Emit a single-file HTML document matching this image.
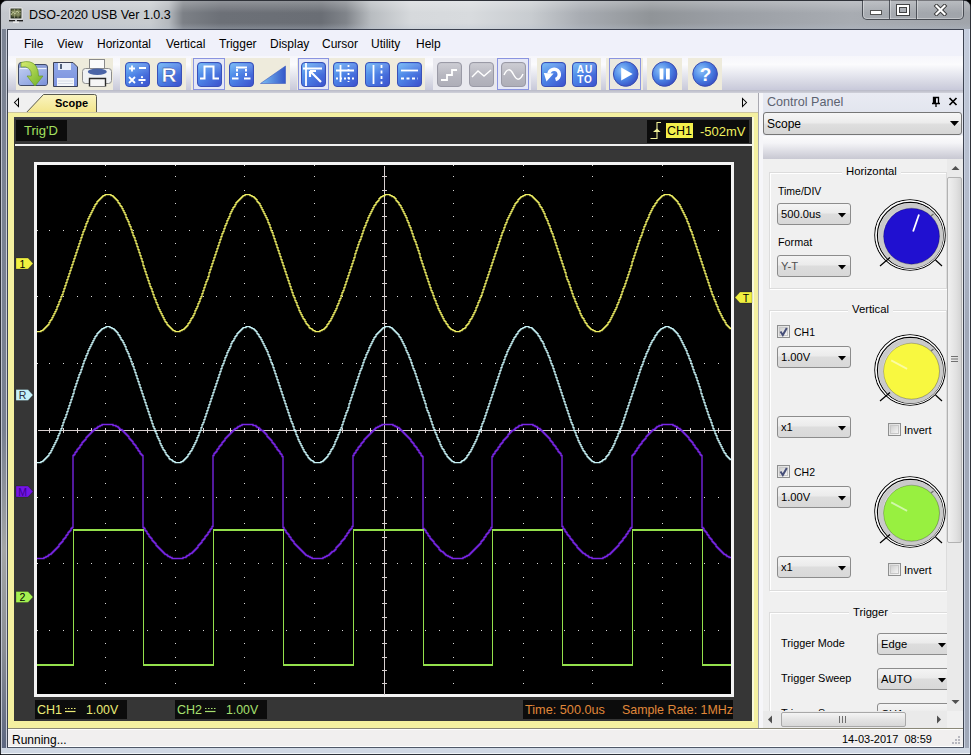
<!DOCTYPE html>
<html><head><meta charset="utf-8">
<style>
*{margin:0;padding:0;box-sizing:border-box}
html,body{width:971px;height:755px;overflow:hidden;background:#000}
body{position:relative;font-family:"Liberation Sans",sans-serif;font-size:12px;color:#000}
.a{position:absolute}
.t{position:absolute;white-space:nowrap;line-height:1}
</style></head><body>

<div class="a" style="left:0;top:0;width:971px;height:755px;border-radius:7px 7px 2px 2px;background:linear-gradient(90deg,#a9afba 0,#b4bac4 8px,#b4bac4 963px,#a9afba 971px);border:1px solid #2e3138"></div>
<div class="a" style="left:1px;top:1px;width:969px;height:28px;border-radius:6px 6px 0 0;background:linear-gradient(90deg,#c2c6cc 0,#c8ccd0 150px,#b4b8bd 168px,#7c8086 182px,#6c7077 220px,#6a6e75 320px,#80848a 345px,#b8bcc0 370px,#d6d9dc 410px,#d8dbde 470px,#c8ccd0 530px,#a8acb2 580px,#909498 650px,#9a9ea4 720px,#a8acb2 850px,#a0a4aa 969px)"></div>
<div class="a" style="left:1px;top:1px;width:969px;height:28px;border-radius:6px 6px 0 0;background:linear-gradient(180deg,rgba(255,255,255,.25) 0,rgba(255,255,255,0) 12px,rgba(255,255,255,0) 22px,rgba(180,190,205,.3) 28px)"></div>
<div class="a" style="left:1px;top:29px;width:6px;height:725px;background:linear-gradient(180deg,#7c8494 0,#788090 400px,#a4a6a6 520px,#8a8e94 620px,#5c6680 720px,#5c6680 725px)"></div>
<div class="a" style="left:1px;top:29px;width:1px;height:725px;background:#c0c4d0"></div>
<div class="a" style="left:6px;top:29px;width:1px;height:725px;background:#c8ccd8"></div>
<div class="a" style="left:964px;top:29px;width:6px;height:725px;background:linear-gradient(180deg,#c4ccdc 0,#b0b8c8 200px,#a0a8b8 300px,#a0a8b8 725px)"></div><div class="a" style="left:964px;top:29px;width:1px;height:725px;background:#c8d0e0"></div><div class="a" style="left:969px;top:29px;width:1px;height:725px;background:#d8e0f0"></div>
<div class="a" style="left:1px;top:748px;width:969px;height:6px;background:linear-gradient(180deg,#d0d8e4 0,#d0d8e4 5px,#f0f4f8 5px)"></div>
<div class="a" style="left:7px;top:29px;width:957px;height:719px;background:#f0f0f0;border:1px solid #3c4250;border-bottom-color:#505868"></div>
<!-- title icon -->
<svg class="a" style="left:8px;top:6px" width="17" height="18"><rect x="1.5" y="1.5" width="13" height="12" rx="1.5" fill="#f4f4f4" stroke="#d8d8d8" stroke-width=".6"/><rect x="2.5" y="2.5" width="11" height="10" fill="#2c3424"/><rect x="3.5" y="3.5" width="9" height="7" fill="#6c7448"/><path d="M3 5.5H13M3 8H13M6.5 3V12M10 3V12" stroke="#9ca07c" stroke-width=".7"/><path d="M3 9L5 6L7 8L9 5L11 7" stroke="#c8d0a0" stroke-width=".8" fill="none"/><rect x="1" y="14" width="6" height="1.4" fill="#202020"/><rect x="9" y="14" width="6" height="1.4" fill="#202020"/><rect x="5" y="15.5" width="6" height="1.6" fill="#e8e8e8"/></svg>
<div class="t" style="left:29px;top:9px;font-size:12.5px;color:#000">DSO-2020 USB Ver 1.0.3</div>
<!-- caption buttons -->
<div class="a" style="left:862px;top:0px;width:102px;height:20px;border:1px solid rgba(40,44,52,.75);border-top:none;border-radius:0 0 5px 5px;box-shadow:inset 0 0 0 1px rgba(255,255,255,.35)"></div>
<div class="a" style="left:889px;top:0px;width:1px;height:19px;background:rgba(40,44,52,.7);box-shadow:1px 0 0 rgba(255,255,255,.35)"></div>
<div class="a" style="left:916px;top:0px;width:1px;height:19px;background:rgba(40,44,52,.7);box-shadow:1px 0 0 rgba(255,255,255,.35)"></div>
<div class="a" style="left:870px;top:10px;width:12px;height:5px;background:#fff;border:1px solid rgba(40,40,40,.8)"></div>
<div class="a" style="left:897px;top:5px;width:12px;height:10px;border:2px solid #fff;box-shadow:0 0 0 1px rgba(40,40,40,.8), inset 0 0 0 1px rgba(40,40,40,.8)"></div>
<svg class="a" style="left:933px;top:4px" width="15" height="12" viewBox="0 0 15 12"><path d="M3.5 2L11.5 10M11.5 2L3.5 10" stroke="#3a3a3a" stroke-width="4" stroke-linecap="square"/><path d="M3.5 2L11.5 10M11.5 2L3.5 10" stroke="#fff" stroke-width="2.2" stroke-linecap="square"/></svg>

<div class="a" style="left:8px;top:30px;width:955px;height:26px;background:#f0f1fa"></div>
<div class="t" style="left:24px;top:38px;font-size:12px">File</div>
<div class="t" style="left:57px;top:38px;font-size:12px">View</div>
<div class="t" style="left:97px;top:38px;font-size:12px">Horizontal</div>
<div class="t" style="left:166px;top:38px;font-size:12px">Vertical</div>
<div class="t" style="left:219px;top:38px;font-size:12px">Trigger</div>
<div class="t" style="left:270px;top:38px;font-size:12px">Display</div>
<div class="t" style="left:322px;top:38px;font-size:12px">Cursor</div>
<div class="t" style="left:371px;top:38px;font-size:12px">Utility</div>
<div class="t" style="left:416px;top:38px;font-size:12px">Help</div>

<div class="a" style="left:8px;top:56px;width:955px;height:34px;background:linear-gradient(180deg,#f6f6fb 0,#fbfbfd 25%,#e6e7ef 55%,#d2d3e0 85%,#c8c9da 100%)"></div>
<div class="a" style="left:8px;top:90px;width:955px;height:3px;background:linear-gradient(180deg,#b8b9c6,#d0d1da)"></div>
<svg class="a" style="left:0;top:0" width="971" height="100">
<defs>
<linearGradient id="btile" x1="0" y1="0" x2="1" y2="1"><stop offset="0" stop-color="#62b0f4"/><stop offset=".45" stop-color="#4c82e6"/><stop offset="1" stop-color="#3c50cc"/></linearGradient>
<linearGradient id="gtile" x1="0" y1="0" x2="0" y2="1"><stop offset="0" stop-color="#c2c2ca"/><stop offset="1" stop-color="#aeaeb8"/></linearGradient>
<linearGradient id="shine" x1="0" y1="0" x2="0" y2="1"><stop offset="0" stop-color="#fff" stop-opacity=".18"/><stop offset="1" stop-color="#fff" stop-opacity="0"/></linearGradient>
<radialGradient id="bcirc" cx=".35" cy=".35" r=".75"><stop offset="0" stop-color="#8ec4f8"/><stop offset=".5" stop-color="#4c86e6"/><stop offset="1" stop-color="#3448c0"/></radialGradient>
<linearGradient id="ramp" x1="0" y1="0" x2="1" y2="0"><stop offset="0" stop-color="#7cc0f4"/><stop offset="1" stop-color="#3458c8"/></linearGradient>
<linearGradient id="fold" x1="0" y1="0" x2="1" y2="1"><stop offset="0" stop-color="#bccaf0"/><stop offset=".6" stop-color="#98ace4"/><stop offset="1" stop-color="#7a90d8"/></linearGradient>
<linearGradient id="arr" x1="0" y1="0" x2="1" y2="1"><stop offset="0" stop-color="#d8ec70"/><stop offset="1" stop-color="#6cb024"/></linearGradient>
<linearGradient id="flop" x1="0" y1="0" x2="0" y2="1"><stop offset="0" stop-color="#90a8e8"/><stop offset="1" stop-color="#7a90dc"/></linearGradient>
</defs>
<rect x="16" y="58" width="97" height="32" fill="#eeebdc"/>
<rect x="120" y="58" width="66" height="32" fill="#eeebdc"/>
<rect x="191" y="58" width="99" height="32" fill="#eeebdc"/>
<rect x="297" y="58" width="128" height="32" fill="#eeebdc"/>
<rect x="537" y="58" width="64" height="32" fill="#eeebdc"/>
<rect x="647" y="58" width="35" height="32" fill="#eeebdc"/>
<rect x="688" y="58" width="34" height="32" fill="#eeebdc"/>
<rect x="606" y="58" width="37" height="32" fill="#eeebdc"/>
<rect x="433" y="58" width="98" height="32" fill="#e9e9ef"/>
<rect x="193.5" y="58.5" width="31" height="31" fill="#e6e8f6" stroke="#8a94e0" stroke-width="1"/>
<rect x="298.5" y="58.5" width="30" height="31" fill="#e6e8f6" stroke="#8a94e0" stroke-width="1"/>
<rect x="497.5" y="58.5" width="31" height="31" fill="#e6e8f6" stroke="#8a94e0" stroke-width="1"/>
<rect x="609.5" y="58.5" width="31" height="31" fill="#ebe9e0" stroke="#8a94e0" stroke-width="1"/>
<path d="M18.5 66Q18.5 62.5 21 62.5H29L31 64.5H45Q47.5 64.5 47.5 67V83Q47.5 85.5 45 85.5H21Q18.5 85.5 18.5 83Z" fill="#8c9ed8" stroke="#404a68" stroke-width="1"/>
<path d="M19 68.5H47V83Q47 85 45 85H21Q19 85 19 83Z" fill="url(#fold)"/>
<path d="M19.5 68.5H46.5" stroke="#e8eefc" stroke-width="1.2"/>
<path d="M21 62.5Q31 59.5 36 66Q38.5 70 38.5 76H43L35 86L27 76H31.5Q31.5 71 29 68.5Q26 66 21 67Z" fill="url(#arr)" stroke="#6a9a28" stroke-width=".7"/>
<path d="M53.5 62.5H73L77.5 67V86.5H53.5Z" fill="url(#flop)" stroke="#3e4254" stroke-width="1"/>
<rect x="58" y="63" width="13" height="7" fill="#e8eef8"/><rect x="60" y="64" width="2" height="5" fill="#50607a"/>
<rect x="57" y="78" width="17" height="8" fill="#f4f6fa"/><path d="M58 81H73M58 83.5H73" stroke="#c8d0e0" stroke-width=".7"/>
<rect x="89.5" y="59.5" width="15" height="10" fill="#fbfbfb" stroke="#8a8a8a" stroke-width="1"/>
<rect x="82.5" y="68.5" width="29" height="15" rx="3" fill="#f0f2f4" stroke="#8c8c8c" stroke-width="1"/>
<ellipse cx="97.3" cy="71.8" rx="9.5" ry="3.2" fill="#4a64a6"/>
<path d="M89.5 86.5V78.5H105.5V86.5" fill="#f6f6f6" stroke="#2a2a2a" stroke-width="1.4"/>
<path d="M90 86.5H105" stroke="#808080" stroke-width="1"/>
<rect x="125.5" y="62.5" width="24" height="24" rx="3.5" fill="url(#btile)" stroke="#3a50b8" stroke-width="1"/><rect x="126.5" y="63.5" width="22" height="11.5" rx="2.5" fill="url(#shine)"/><g transform="translate(125,62)"><path d="M4 6.5H10M7 3.5V9.5M14 6H21M4 15L10 21M10 15L4 21M13.5 18H20.5" stroke="#fff" stroke-width="1.8"/><circle cx="17" cy="15.2" r="1.1" fill="#fff"/><circle cx="17" cy="20.8" r="1.1" fill="#fff"/></g>
<rect x="157.5" y="62.5" width="24" height="24" rx="3.5" fill="url(#btile)" stroke="#3a50b8" stroke-width="1"/><rect x="158.5" y="63.5" width="22" height="11.5" rx="2.5" fill="url(#shine)"/><g transform="translate(157,62)"><text x="12" y="20" font-family="Liberation Sans" font-weight="bold" font-size="21" fill="#fff" stroke="#2a3a90" stroke-width=".4" text-anchor="middle">R</text></g>
<rect x="197.5" y="62.5" width="24" height="24" rx="3.5" fill="url(#btile)" stroke="#3a50b8" stroke-width="1"/><rect x="198.5" y="63.5" width="22" height="11.5" rx="2.5" fill="url(#shine)"/><g transform="translate(197,62)"><path d="M3 16.5H7.5V4.5H16.5V16.5H22" stroke="#fff" stroke-width="2" fill="none"/></g>
<rect x="229.5" y="62.5" width="24" height="24" rx="3.5" fill="url(#btile)" stroke="#3a50b8" stroke-width="1"/><rect x="230.5" y="63.5" width="22" height="11.5" rx="2.5" fill="url(#shine)"/><g transform="translate(229,62)"><path d="M3 16.5H9.5M15 16.5H21.5M7 5.5H18" stroke="#fff" stroke-width="2" fill="none"/><path d="M8 7V9.5M8 11V14M17 7V9.5M17 11V14" stroke="#fff" stroke-width="2" fill="none"/></g>
<path d="M260.5 83.5L285.5 66V83.5Z" fill="url(#ramp)" stroke="#3c5cc0" stroke-width=".6"/>
<rect x="301.5" y="62.5" width="24" height="24" rx="3.5" fill="url(#btile)" stroke="#3a50b8" stroke-width="1"/><rect x="302.5" y="63.5" width="22" height="11.5" rx="2.5" fill="url(#shine)"/><g transform="translate(301,62)"><path d="M5 1V24M2 6.5H21" stroke="#fff" stroke-width="1.8"/><path d="M20 20L9 9M9 9V15M9 9H15" stroke="#fff" stroke-width="2.2" fill="none"/></g>
<rect x="333.5" y="62.5" width="24" height="24" rx="3.5" fill="url(#btile)" stroke="#3a50b8" stroke-width="1"/><rect x="334.5" y="63.5" width="22" height="11.5" rx="2.5" fill="url(#shine)"/><g transform="translate(333,62)"><path d="M7.5 3V20M3 8.5H21" stroke="#fff" stroke-width="1.8"/><path d="M15.5 3V20M3 16.5H21" stroke="#fff" stroke-width="1.8" stroke-dasharray="2 2"/></g>
<rect x="365.5" y="62.5" width="24" height="24" rx="3.5" fill="url(#btile)" stroke="#3a50b8" stroke-width="1"/><rect x="366.5" y="63.5" width="22" height="11.5" rx="2.5" fill="url(#shine)"/><g transform="translate(365,62)"><path d="M8.5 3V22" stroke="#fff" stroke-width="1.8"/><path d="M16.5 3V22" stroke="#fff" stroke-width="1.8" stroke-dasharray="3 2.5"/></g>
<rect x="397.5" y="62.5" width="24" height="24" rx="3.5" fill="url(#btile)" stroke="#3a50b8" stroke-width="1"/><rect x="398.5" y="63.5" width="22" height="11.5" rx="2.5" fill="url(#shine)"/><g transform="translate(397,62)"><path d="M4 8.5H21" stroke="#fff" stroke-width="1.8"/><path d="M4 16.5H21" stroke="#fff" stroke-width="1.8" stroke-dasharray="3 2.5"/></g>
<rect x="437.5" y="62.5" width="24" height="24" rx="3.5" fill="url(#gtile)" stroke="#9a9aa6" stroke-width="1"/><rect x="438.5" y="63.5" width="22" height="11.5" rx="2.5" fill="url(#shine)"/><g transform="translate(437,62)"><path d="M4 18H10V13H15V8H20" stroke="#fff" stroke-width="1.8" fill="none"/></g>
<rect x="469.5" y="62.5" width="24" height="24" rx="3.5" fill="url(#gtile)" stroke="#9a9aa6" stroke-width="1"/><rect x="470.5" y="63.5" width="22" height="11.5" rx="2.5" fill="url(#shine)"/><g transform="translate(469,62)"><path d="M3 15L9 9L15 14L22 8" stroke="#fff" stroke-width="1.4" fill="none"/></g>
<rect x="501.5" y="62.5" width="24" height="24" rx="3.5" fill="url(#gtile)" stroke="#9a9aa6" stroke-width="1"/><rect x="502.5" y="63.5" width="22" height="11.5" rx="2.5" fill="url(#shine)"/><g transform="translate(501,62)"><path d="M3 13Q7.5 3 12.5 12.5T22 12" stroke="#fff" stroke-width="1.5" fill="none"/></g>
<rect x="541.5" y="62.5" width="24" height="24" rx="3.5" fill="url(#btile)" stroke="#3a50b8" stroke-width="1"/><rect x="542.5" y="63.5" width="22" height="11.5" rx="2.5" fill="url(#shine)"/><g transform="translate(541,62)"><path d="M14.5 17.5A5.2 5.2 0 1 0 8 11.5" stroke="#fff" stroke-width="3.6" fill="none"/><path d="M2.8 11L12.6 11.5L5.5 19.5Z" fill="#fff"/></g>
<rect x="572.5" y="62.5" width="24" height="24" rx="3.5" fill="url(#btile)" stroke="#3a50b8" stroke-width="1"/><rect x="573.5" y="63.5" width="22" height="11.5" rx="2.5" fill="url(#shine)"/><g transform="translate(572,62)"><text x="13" y="10.5" font-family="Liberation Sans" font-weight="bold" font-size="10" letter-spacing="1" fill="#fff" text-anchor="middle">AU</text><text x="13" y="20.5" font-family="Liberation Sans" font-weight="bold" font-size="10" letter-spacing="1" fill="#fff" text-anchor="middle">TO</text></g>
<circle cx="625.7" cy="74" r="12.3" fill="url(#bcirc)" stroke="#3a4cb0" stroke-width="1"/><g transform="translate(625.7,74)"><path d="M-4.5 -6.5L7 0L-4.5 6.5Z" fill="#fff"/></g>
<circle cx="664.6" cy="74" r="12.3" fill="url(#bcirc)" stroke="#3a4cb0" stroke-width="1"/><g transform="translate(664.6,74)"><rect x="-5" y="-5.5" width="3.8" height="11" fill="#fff"/><rect x="1.4" y="-5.5" width="3.8" height="11" fill="#fff"/></g>
<circle cx="705.1" cy="74" r="12.3" fill="url(#bcirc)" stroke="#3a4cb0" stroke-width="1"/><g transform="translate(705.1,74)"><text x="0.5" y="7" font-family="Liberation Sans" font-weight="bold" font-size="19" fill="#fff" text-anchor="middle">?</text></g>
</svg>

<div class="a" style="left:8px;top:93px;width:751px;height:19px;background:#f0f0f0"></div>
<svg class="a" style="left:13px;top:97px" width="8" height="11"><path d="M5.5 1.5L1.5 5.5L5.5 9.5Z" fill="none" stroke="#000" stroke-width="1.05"/></svg>
<svg class="a" style="left:741px;top:97px" width="8" height="11"><path d="M1.5 1.5L5.5 5.5L1.5 9.5Z" fill="none" stroke="#000" stroke-width="1.05"/></svg>
<svg class="a" style="left:24px;top:93px" width="76" height="21"><defs><linearGradient id="tg" x1="0" y1="0" x2="0" y2="1"><stop offset="0" stop-color="#faf4c0"/><stop offset="1" stop-color="#f2e488"/></linearGradient></defs><path d="M1.5 20.5L19.5 1.5H70.5Q72.5 1.5 72.5 3.5V20.5" fill="url(#tg)" stroke="#5a5a50" stroke-width="1"/></svg>
<div class="t" style="left:55px;top:98px;font-size:11px;font-weight:bold">Scope</div>


<div class="a" style="left:8px;top:112px;width:751px;height:616px;background:#f4f0a0;border-top:1px solid #cdc6a0"></div>
<div class="a" style="left:752px;top:117px;width:2px;height:605px;background:#f8f8dc"></div>
<div class="a" style="left:758px;top:93px;width:1px;height:635px;background:#a8a8b0"></div>
<div class="a" style="left:14px;top:117px;width:738px;height:604px;background:#363636"></div>
<div class="a" style="left:14px;top:117px;width:738px;height:2px;background:#3e3e48"></div>

<svg width="971" height="755" style="position:absolute;left:0;top:0">
<rect x="34" y="162" width="700" height="535" fill="#f4f4f4"/>
<rect x="37" y="165" width="694" height="529" fill="#000"/>
<path d="M105 165h1v1h-1zM105 176h1v1h-1zM105 190h1v1h-1zM105 203h1v1h-1zM105 216h1v1h-1zM105 230h1v1h-1zM105 243h1v1h-1zM105 256h1v1h-1zM105 270h1v1h-1zM105 283h1v1h-1zM105 296h1v1h-1zM105 310h1v1h-1zM105 323h1v1h-1zM105 336h1v1h-1zM105 350h1v1h-1zM105 363h1v1h-1zM105 376h1v1h-1zM105 390h1v1h-1zM105 403h1v1h-1zM105 416h1v1h-1zM105 430h1v1h-1zM105 443h1v1h-1zM105 456h1v1h-1zM105 470h1v1h-1zM105 483h1v1h-1zM105 497h1v1h-1zM105 510h1v1h-1zM105 523h1v1h-1zM105 537h1v1h-1zM105 550h1v1h-1zM105 563h1v1h-1zM105 577h1v1h-1zM105 590h1v1h-1zM105 603h1v1h-1zM105 617h1v1h-1zM105 630h1v1h-1zM105 643h1v1h-1zM105 657h1v1h-1zM105 670h1v1h-1zM105 683h1v1h-1zM175 165h1v1h-1zM175 176h1v1h-1zM175 190h1v1h-1zM175 203h1v1h-1zM175 216h1v1h-1zM175 230h1v1h-1zM175 243h1v1h-1zM175 256h1v1h-1zM175 270h1v1h-1zM175 283h1v1h-1zM175 296h1v1h-1zM175 310h1v1h-1zM175 323h1v1h-1zM175 336h1v1h-1zM175 350h1v1h-1zM175 363h1v1h-1zM175 376h1v1h-1zM175 390h1v1h-1zM175 403h1v1h-1zM175 416h1v1h-1zM175 430h1v1h-1zM175 443h1v1h-1zM175 456h1v1h-1zM175 470h1v1h-1zM175 483h1v1h-1zM175 497h1v1h-1zM175 510h1v1h-1zM175 523h1v1h-1zM175 537h1v1h-1zM175 550h1v1h-1zM175 563h1v1h-1zM175 577h1v1h-1zM175 590h1v1h-1zM175 603h1v1h-1zM175 617h1v1h-1zM175 630h1v1h-1zM175 643h1v1h-1zM175 657h1v1h-1zM175 670h1v1h-1zM175 683h1v1h-1zM244 165h1v1h-1zM244 176h1v1h-1zM244 190h1v1h-1zM244 203h1v1h-1zM244 216h1v1h-1zM244 230h1v1h-1zM244 243h1v1h-1zM244 256h1v1h-1zM244 270h1v1h-1zM244 283h1v1h-1zM244 296h1v1h-1zM244 310h1v1h-1zM244 323h1v1h-1zM244 336h1v1h-1zM244 350h1v1h-1zM244 363h1v1h-1zM244 376h1v1h-1zM244 390h1v1h-1zM244 403h1v1h-1zM244 416h1v1h-1zM244 430h1v1h-1zM244 443h1v1h-1zM244 456h1v1h-1zM244 470h1v1h-1zM244 483h1v1h-1zM244 497h1v1h-1zM244 510h1v1h-1zM244 523h1v1h-1zM244 537h1v1h-1zM244 550h1v1h-1zM244 563h1v1h-1zM244 577h1v1h-1zM244 590h1v1h-1zM244 603h1v1h-1zM244 617h1v1h-1zM244 630h1v1h-1zM244 643h1v1h-1zM244 657h1v1h-1zM244 670h1v1h-1zM244 683h1v1h-1zM314 165h1v1h-1zM314 176h1v1h-1zM314 190h1v1h-1zM314 203h1v1h-1zM314 216h1v1h-1zM314 230h1v1h-1zM314 243h1v1h-1zM314 256h1v1h-1zM314 270h1v1h-1zM314 283h1v1h-1zM314 296h1v1h-1zM314 310h1v1h-1zM314 323h1v1h-1zM314 336h1v1h-1zM314 350h1v1h-1zM314 363h1v1h-1zM314 376h1v1h-1zM314 390h1v1h-1zM314 403h1v1h-1zM314 416h1v1h-1zM314 430h1v1h-1zM314 443h1v1h-1zM314 456h1v1h-1zM314 470h1v1h-1zM314 483h1v1h-1zM314 497h1v1h-1zM314 510h1v1h-1zM314 523h1v1h-1zM314 537h1v1h-1zM314 550h1v1h-1zM314 563h1v1h-1zM314 577h1v1h-1zM314 590h1v1h-1zM314 603h1v1h-1zM314 617h1v1h-1zM314 630h1v1h-1zM314 643h1v1h-1zM314 657h1v1h-1zM314 670h1v1h-1zM314 683h1v1h-1zM453 165h1v1h-1zM453 176h1v1h-1zM453 190h1v1h-1zM453 203h1v1h-1zM453 216h1v1h-1zM453 230h1v1h-1zM453 243h1v1h-1zM453 256h1v1h-1zM453 270h1v1h-1zM453 283h1v1h-1zM453 296h1v1h-1zM453 310h1v1h-1zM453 323h1v1h-1zM453 336h1v1h-1zM453 350h1v1h-1zM453 363h1v1h-1zM453 376h1v1h-1zM453 390h1v1h-1zM453 403h1v1h-1zM453 416h1v1h-1zM453 430h1v1h-1zM453 443h1v1h-1zM453 456h1v1h-1zM453 470h1v1h-1zM453 483h1v1h-1zM453 497h1v1h-1zM453 510h1v1h-1zM453 523h1v1h-1zM453 537h1v1h-1zM453 550h1v1h-1zM453 563h1v1h-1zM453 577h1v1h-1zM453 590h1v1h-1zM453 603h1v1h-1zM453 617h1v1h-1zM453 630h1v1h-1zM453 643h1v1h-1zM453 657h1v1h-1zM453 670h1v1h-1zM453 683h1v1h-1zM523 165h1v1h-1zM523 176h1v1h-1zM523 190h1v1h-1zM523 203h1v1h-1zM523 216h1v1h-1zM523 230h1v1h-1zM523 243h1v1h-1zM523 256h1v1h-1zM523 270h1v1h-1zM523 283h1v1h-1zM523 296h1v1h-1zM523 310h1v1h-1zM523 323h1v1h-1zM523 336h1v1h-1zM523 350h1v1h-1zM523 363h1v1h-1zM523 376h1v1h-1zM523 390h1v1h-1zM523 403h1v1h-1zM523 416h1v1h-1zM523 430h1v1h-1zM523 443h1v1h-1zM523 456h1v1h-1zM523 470h1v1h-1zM523 483h1v1h-1zM523 497h1v1h-1zM523 510h1v1h-1zM523 523h1v1h-1zM523 537h1v1h-1zM523 550h1v1h-1zM523 563h1v1h-1zM523 577h1v1h-1zM523 590h1v1h-1zM523 603h1v1h-1zM523 617h1v1h-1zM523 630h1v1h-1zM523 643h1v1h-1zM523 657h1v1h-1zM523 670h1v1h-1zM523 683h1v1h-1zM592 165h1v1h-1zM592 176h1v1h-1zM592 190h1v1h-1zM592 203h1v1h-1zM592 216h1v1h-1zM592 230h1v1h-1zM592 243h1v1h-1zM592 256h1v1h-1zM592 270h1v1h-1zM592 283h1v1h-1zM592 296h1v1h-1zM592 310h1v1h-1zM592 323h1v1h-1zM592 336h1v1h-1zM592 350h1v1h-1zM592 363h1v1h-1zM592 376h1v1h-1zM592 390h1v1h-1zM592 403h1v1h-1zM592 416h1v1h-1zM592 430h1v1h-1zM592 443h1v1h-1zM592 456h1v1h-1zM592 470h1v1h-1zM592 483h1v1h-1zM592 497h1v1h-1zM592 510h1v1h-1zM592 523h1v1h-1zM592 537h1v1h-1zM592 550h1v1h-1zM592 563h1v1h-1zM592 577h1v1h-1zM592 590h1v1h-1zM592 603h1v1h-1zM592 617h1v1h-1zM592 630h1v1h-1zM592 643h1v1h-1zM592 657h1v1h-1zM592 670h1v1h-1zM592 683h1v1h-1zM662 165h1v1h-1zM662 176h1v1h-1zM662 190h1v1h-1zM662 203h1v1h-1zM662 216h1v1h-1zM662 230h1v1h-1zM662 243h1v1h-1zM662 256h1v1h-1zM662 270h1v1h-1zM662 283h1v1h-1zM662 296h1v1h-1zM662 310h1v1h-1zM662 323h1v1h-1zM662 336h1v1h-1zM662 350h1v1h-1zM662 363h1v1h-1zM662 376h1v1h-1zM662 390h1v1h-1zM662 403h1v1h-1zM662 416h1v1h-1zM662 430h1v1h-1zM662 443h1v1h-1zM662 456h1v1h-1zM662 470h1v1h-1zM662 483h1v1h-1zM662 497h1v1h-1zM662 510h1v1h-1zM662 523h1v1h-1zM662 537h1v1h-1zM662 550h1v1h-1zM662 563h1v1h-1zM662 577h1v1h-1zM662 590h1v1h-1zM662 603h1v1h-1zM662 617h1v1h-1zM662 630h1v1h-1zM662 643h1v1h-1zM662 657h1v1h-1zM662 670h1v1h-1zM662 683h1v1h-1zM37 230h1v1h-1zM49 230h1v1h-1zM63 230h1v1h-1zM77 230h1v1h-1zM91 230h1v1h-1zM105 230h1v1h-1zM119 230h1v1h-1zM133 230h1v1h-1zM147 230h1v1h-1zM161 230h1v1h-1zM175 230h1v1h-1zM189 230h1v1h-1zM203 230h1v1h-1zM216 230h1v1h-1zM230 230h1v1h-1zM244 230h1v1h-1zM258 230h1v1h-1zM272 230h1v1h-1zM286 230h1v1h-1zM300 230h1v1h-1zM314 230h1v1h-1zM328 230h1v1h-1zM342 230h1v1h-1zM356 230h1v1h-1zM370 230h1v1h-1zM384 230h1v1h-1zM397 230h1v1h-1zM411 230h1v1h-1zM425 230h1v1h-1zM439 230h1v1h-1zM453 230h1v1h-1zM467 230h1v1h-1zM481 230h1v1h-1zM495 230h1v1h-1zM509 230h1v1h-1zM523 230h1v1h-1zM537 230h1v1h-1zM551 230h1v1h-1zM564 230h1v1h-1zM578 230h1v1h-1zM592 230h1v1h-1zM606 230h1v1h-1zM620 230h1v1h-1zM634 230h1v1h-1zM648 230h1v1h-1zM662 230h1v1h-1zM676 230h1v1h-1zM690 230h1v1h-1zM704 230h1v1h-1zM718 230h1v1h-1zM37 296h1v1h-1zM49 296h1v1h-1zM63 296h1v1h-1zM77 296h1v1h-1zM91 296h1v1h-1zM105 296h1v1h-1zM119 296h1v1h-1zM133 296h1v1h-1zM147 296h1v1h-1zM161 296h1v1h-1zM175 296h1v1h-1zM189 296h1v1h-1zM203 296h1v1h-1zM216 296h1v1h-1zM230 296h1v1h-1zM244 296h1v1h-1zM258 296h1v1h-1zM272 296h1v1h-1zM286 296h1v1h-1zM300 296h1v1h-1zM314 296h1v1h-1zM328 296h1v1h-1zM342 296h1v1h-1zM356 296h1v1h-1zM370 296h1v1h-1zM384 296h1v1h-1zM397 296h1v1h-1zM411 296h1v1h-1zM425 296h1v1h-1zM439 296h1v1h-1zM453 296h1v1h-1zM467 296h1v1h-1zM481 296h1v1h-1zM495 296h1v1h-1zM509 296h1v1h-1zM523 296h1v1h-1zM537 296h1v1h-1zM551 296h1v1h-1zM564 296h1v1h-1zM578 296h1v1h-1zM592 296h1v1h-1zM606 296h1v1h-1zM620 296h1v1h-1zM634 296h1v1h-1zM648 296h1v1h-1zM662 296h1v1h-1zM676 296h1v1h-1zM690 296h1v1h-1zM704 296h1v1h-1zM718 296h1v1h-1zM37 363h1v1h-1zM49 363h1v1h-1zM63 363h1v1h-1zM77 363h1v1h-1zM91 363h1v1h-1zM105 363h1v1h-1zM119 363h1v1h-1zM133 363h1v1h-1zM147 363h1v1h-1zM161 363h1v1h-1zM175 363h1v1h-1zM189 363h1v1h-1zM203 363h1v1h-1zM216 363h1v1h-1zM230 363h1v1h-1zM244 363h1v1h-1zM258 363h1v1h-1zM272 363h1v1h-1zM286 363h1v1h-1zM300 363h1v1h-1zM314 363h1v1h-1zM328 363h1v1h-1zM342 363h1v1h-1zM356 363h1v1h-1zM370 363h1v1h-1zM384 363h1v1h-1zM397 363h1v1h-1zM411 363h1v1h-1zM425 363h1v1h-1zM439 363h1v1h-1zM453 363h1v1h-1zM467 363h1v1h-1zM481 363h1v1h-1zM495 363h1v1h-1zM509 363h1v1h-1zM523 363h1v1h-1zM537 363h1v1h-1zM551 363h1v1h-1zM564 363h1v1h-1zM578 363h1v1h-1zM592 363h1v1h-1zM606 363h1v1h-1zM620 363h1v1h-1zM634 363h1v1h-1zM648 363h1v1h-1zM662 363h1v1h-1zM676 363h1v1h-1zM690 363h1v1h-1zM704 363h1v1h-1zM718 363h1v1h-1zM37 497h1v1h-1zM49 497h1v1h-1zM63 497h1v1h-1zM77 497h1v1h-1zM91 497h1v1h-1zM105 497h1v1h-1zM119 497h1v1h-1zM133 497h1v1h-1zM147 497h1v1h-1zM161 497h1v1h-1zM175 497h1v1h-1zM189 497h1v1h-1zM203 497h1v1h-1zM216 497h1v1h-1zM230 497h1v1h-1zM244 497h1v1h-1zM258 497h1v1h-1zM272 497h1v1h-1zM286 497h1v1h-1zM300 497h1v1h-1zM314 497h1v1h-1zM328 497h1v1h-1zM342 497h1v1h-1zM356 497h1v1h-1zM370 497h1v1h-1zM384 497h1v1h-1zM397 497h1v1h-1zM411 497h1v1h-1zM425 497h1v1h-1zM439 497h1v1h-1zM453 497h1v1h-1zM467 497h1v1h-1zM481 497h1v1h-1zM495 497h1v1h-1zM509 497h1v1h-1zM523 497h1v1h-1zM537 497h1v1h-1zM551 497h1v1h-1zM564 497h1v1h-1zM578 497h1v1h-1zM592 497h1v1h-1zM606 497h1v1h-1zM620 497h1v1h-1zM634 497h1v1h-1zM648 497h1v1h-1zM662 497h1v1h-1zM676 497h1v1h-1zM690 497h1v1h-1zM704 497h1v1h-1zM718 497h1v1h-1zM37 563h1v1h-1zM49 563h1v1h-1zM63 563h1v1h-1zM77 563h1v1h-1zM91 563h1v1h-1zM105 563h1v1h-1zM119 563h1v1h-1zM133 563h1v1h-1zM147 563h1v1h-1zM161 563h1v1h-1zM175 563h1v1h-1zM189 563h1v1h-1zM203 563h1v1h-1zM216 563h1v1h-1zM230 563h1v1h-1zM244 563h1v1h-1zM258 563h1v1h-1zM272 563h1v1h-1zM286 563h1v1h-1zM300 563h1v1h-1zM314 563h1v1h-1zM328 563h1v1h-1zM342 563h1v1h-1zM356 563h1v1h-1zM370 563h1v1h-1zM384 563h1v1h-1zM397 563h1v1h-1zM411 563h1v1h-1zM425 563h1v1h-1zM439 563h1v1h-1zM453 563h1v1h-1zM467 563h1v1h-1zM481 563h1v1h-1zM495 563h1v1h-1zM509 563h1v1h-1zM523 563h1v1h-1zM537 563h1v1h-1zM551 563h1v1h-1zM564 563h1v1h-1zM578 563h1v1h-1zM592 563h1v1h-1zM606 563h1v1h-1zM620 563h1v1h-1zM634 563h1v1h-1zM648 563h1v1h-1zM662 563h1v1h-1zM676 563h1v1h-1zM690 563h1v1h-1zM704 563h1v1h-1zM718 563h1v1h-1zM37 630h1v1h-1zM49 630h1v1h-1zM63 630h1v1h-1zM77 630h1v1h-1zM91 630h1v1h-1zM105 630h1v1h-1zM119 630h1v1h-1zM133 630h1v1h-1zM147 630h1v1h-1zM161 630h1v1h-1zM175 630h1v1h-1zM189 630h1v1h-1zM203 630h1v1h-1zM216 630h1v1h-1zM230 630h1v1h-1zM244 630h1v1h-1zM258 630h1v1h-1zM272 630h1v1h-1zM286 630h1v1h-1zM300 630h1v1h-1zM314 630h1v1h-1zM328 630h1v1h-1zM342 630h1v1h-1zM356 630h1v1h-1zM370 630h1v1h-1zM384 630h1v1h-1zM397 630h1v1h-1zM411 630h1v1h-1zM425 630h1v1h-1zM439 630h1v1h-1zM453 630h1v1h-1zM467 630h1v1h-1zM481 630h1v1h-1zM495 630h1v1h-1zM509 630h1v1h-1zM523 630h1v1h-1zM537 630h1v1h-1zM551 630h1v1h-1zM564 630h1v1h-1zM578 630h1v1h-1zM592 630h1v1h-1zM606 630h1v1h-1zM620 630h1v1h-1zM634 630h1v1h-1zM648 630h1v1h-1zM662 630h1v1h-1zM676 630h1v1h-1zM690 630h1v1h-1zM704 630h1v1h-1zM718 630h1v1h-1z" fill="#d8d8d8" shape-rendering="crispEdges"/>
<path d="M37 430h694M384 165v529" stroke="#d8d0d0" stroke-width="1" fill="none" transform="translate(0.5,0.5)" shape-rendering="crispEdges"/>
<path d="M49.5 428v5M63.5 428v5M77.5 428v5M91.5 428v5M105.5 428v5M119.5 428v5M133.5 428v5M147.5 428v5M161.5 428v5M175.5 428v5M189.5 428v5M203.5 428v5M216.5 428v5M230.5 428v5M244.5 428v5M258.5 428v5M272.5 428v5M286.5 428v5M300.5 428v5M314.5 428v5M328.5 428v5M342.5 428v5M356.5 428v5M370.5 428v5M384.5 428v5M397.5 428v5M411.5 428v5M425.5 428v5M439.5 428v5M453.5 428v5M467.5 428v5M481.5 428v5M495.5 428v5M509.5 428v5M523.5 428v5M537.5 428v5M551.5 428v5M564.5 428v5M578.5 428v5M592.5 428v5M606.5 428v5M620.5 428v5M634.5 428v5M648.5 428v5M662.5 428v5M676.5 428v5M690.5 428v5M704.5 428v5M718.5 428v5M382 176.5h5M382 190.5h5M382 203.5h5M382 216.5h5M382 230.5h5M382 243.5h5M382 256.5h5M382 270.5h5M382 283.5h5M382 296.5h5M382 310.5h5M382 323.5h5M382 336.5h5M382 350.5h5M382 363.5h5M382 376.5h5M382 390.5h5M382 403.5h5M382 416.5h5M382 430.5h5M382 443.5h5M382 456.5h5M382 470.5h5M382 483.5h5M382 497.5h5M382 510.5h5M382 523.5h5M382 537.5h5M382 550.5h5M382 563.5h5M382 577.5h5M382 590.5h5M382 603.5h5M382 617.5h5M382 630.5h5M382 643.5h5M382 657.5h5M382 670.5h5M382 683.5h5" stroke="#d8d0d0" stroke-width="1" fill="none" shape-rendering="crispEdges"/>
<path d="M37 331.5H38H39H40H41V330.5H42H43V329.5H44V328.5H45V327.5H46V326.5H47V325.5H48V324.5H49V322.5H50V320.5H51V319.5H52V317.5H53V315.5H54V313.5H55V311.5H56V309.5H57V306.5H58V304.5H59V301.5H60V299.5H61V296.5H62V294.5H63V291.5H64V288.5H65V285.5H66V282.5H67V279.5H68V276.5H69V273.5H70V270.5H71V267.5H72V264.5H73V261.5H74V258.5H75V255.5H76V252.5H77V249.5H78V246.5H79V243.5H80V240.5H81V237.5H82V234.5H83V231.5H84V229.5H85V226.5H86V223.5H87V221.5H88V218.5H89V216.5H90V214.5H91V212.5H92V210.5H93V208.5H94V206.5H95V204.5H96V203.5H97V201.5H98V200.5H99V199.5H100V198.5H101V197.5H102V196.5H103V195.5H104H105V194.5H106H107H108H109H110H111V195.5H112H113V196.5H114V197.5H115V198.5H116V199.5H117V200.5H118V202.5H119V203.5H120V205.5H121V206.5H122V208.5H123V210.5H124V212.5H125V214.5H126V217.5H127V219.5H128V221.5H129V224.5H130V226.5H131V229.5H132V232.5H133V235.5H134V237.5H135V240.5H136V243.5H137V246.5H138V249.5H139V252.5H140V255.5H141V258.5H142V261.5H143V265.5H144V268.5H145V271.5H146V274.5H147V277.5H148V280.5H149V283.5H150V286.5H151V288.5H152V291.5H153V294.5H154V297.5H155V299.5H156V302.5H157V304.5H158V307.5H159V309.5H160V311.5H161V313.5H162V315.5H163V317.5H164V319.5H165V321.5H166V322.5H167V324.5H168V325.5H169V326.5H170V327.5H171V328.5H172V329.5H173V330.5H174H175V331.5H176H177H178H179H180V330.5H181H182V329.5H183H184V328.5H185V327.5H186V326.5H187V325.5H188V323.5H189V322.5H190V320.5H191V318.5H192V317.5H193V315.5H194V313.5H195V310.5H196V308.5H197V306.5H198V303.5H199V301.5H200V298.5H201V296.5H202V293.5H203V290.5H204V287.5H205V284.5H206V281.5H207V279.5H208V276.5H209V272.5H210V269.5H211V266.5H212V263.5H213V260.5H214V257.5H215V254.5H216V251.5H217V248.5H218V245.5H219V242.5H220V239.5H221V236.5H222V233.5H223V231.5H224V228.5H225V225.5H226V223.5H227V220.5H228V218.5H229V216.5H230V213.5H231V211.5H232V209.5H233V207.5H234V206.5H235V204.5H236V202.5H237V201.5H238V200.5H239V199.5H240V198.5H241V197.5H242V196.5H243V195.5H244H245V194.5H246H247H248H249H250V195.5H251H252V196.5H253H254V197.5H255V198.5H256V199.5H257V201.5H258V202.5H259V203.5H260V205.5H261V207.5H262V209.5H263V211.5H264V213.5H265V215.5H266V217.5H267V219.5H268V222.5H269V224.5H270V227.5H271V230.5H272V232.5H273V235.5H274V238.5H275V241.5H276V244.5H277V247.5H278V250.5H279V253.5H280V256.5H281V259.5H282V262.5H283V265.5H284V268.5H285V271.5H286V274.5H287V277.5H288V280.5H289V283.5H290V286.5H291V289.5H292V292.5H293V295.5H294V297.5H295V300.5H296V302.5H297V305.5H298V307.5H299V310.5H300V312.5H301V314.5H302V316.5H303V318.5H304V319.5H305V321.5H306V323.5H307V324.5H308V325.5H309V327.5H310V328.5H311H312V329.5H313V330.5H314H315V331.5H316H317H318H319H320V330.5H321H322V329.5H323H324V328.5H325V327.5H326V326.5H327V324.5H328V323.5H329V321.5H330V320.5H331V318.5H332V316.5H333V314.5H334V312.5H335V310.5H336V308.5H337V305.5H338V303.5H339V300.5H340V298.5H341V295.5H342V292.5H343V290.5H344V287.5H345V284.5H346V281.5H347V278.5H348V275.5H349V272.5H350V269.5H351V266.5H352V263.5H353V260.5H354V257.5H355V253.5H356V250.5H357V247.5H358V244.5H359V241.5H360V239.5H361V236.5H362V233.5H363V230.5H364V227.5H365V225.5H366V222.5H367V220.5H368V217.5H369V215.5H370V213.5H371V211.5H372V209.5H373V207.5H374V205.5H375V204.5H376V202.5H377V201.5H378V200.5H379V198.5H380V197.5H381V196.5H382H383V195.5H384H385V194.5H386H387H388H389H390V195.5H391H392V196.5H393H394V197.5H395V198.5H396V200.5H397V201.5H398V202.5H399V204.5H400V205.5H401V207.5H402V209.5H403V211.5H404V213.5H405V215.5H406V217.5H407V220.5H408V222.5H409V225.5H410V227.5H411V230.5H412V233.5H413V236.5H414V239.5H415V241.5H416V244.5H417V247.5H418V250.5H419V253.5H420V257.5H421V260.5H422V263.5H423V266.5H424V269.5H425V272.5H426V275.5H427V278.5H428V281.5H429V284.5H430V287.5H431V290.5H432V292.5H433V295.5H434V298.5H435V300.5H436V303.5H437V305.5H438V308.5H439V310.5H440V312.5H441V314.5H442V316.5H443V318.5H444V320.5H445V321.5H446V323.5H447V324.5H448V326.5H449V327.5H450V328.5H451V329.5H452H453V330.5H454H455V331.5H456H457H458H459H460V330.5H461H462V329.5H463V328.5H464H465V327.5H466V325.5H467V324.5H468V323.5H469V321.5H470V319.5H471V318.5H472V316.5H473V314.5H474V312.5H475V310.5H476V307.5H477V305.5H478V302.5H479V300.5H480V297.5H481V295.5H482V292.5H483V289.5H484V286.5H485V283.5H486V280.5H487V277.5H488V274.5H489V271.5H490V268.5H491V265.5H492V262.5H493V259.5H494V256.5H495V253.5H496V250.5H497V247.5H498V244.5H499V241.5H500V238.5H501V235.5H502V232.5H503V230.5H504V227.5H505V224.5H506V222.5H507V219.5H508V217.5H509V215.5H510V213.5H511V211.5H512V209.5H513V207.5H514V205.5H515V203.5H516V202.5H517V201.5H518V199.5H519V198.5H520V197.5H521V196.5H522H523V195.5H524H525V194.5H526H527H528H529H530V195.5H531H532V196.5H533V197.5H534V198.5H535V199.5H536V200.5H537V201.5H538V202.5H539V204.5H540V206.5H541V207.5H542V209.5H543V211.5H544V213.5H545V216.5H546V218.5H547V220.5H548V223.5H549V225.5H550V228.5H551V231.5H552V233.5H553V236.5H554V239.5H555V242.5H556V245.5H557V248.5H558V251.5H559V254.5H560V257.5H561V260.5H562V263.5H563V266.5H564V269.5H565V272.5H566V276.5H567V279.5H568V281.5H569V284.5H570V287.5H571V290.5H572V293.5H573V296.5H574V298.5H575V301.5H576V303.5H577V306.5H578V308.5H579V310.5H580V313.5H581V315.5H582V317.5H583V318.5H584V320.5H585V322.5H586V323.5H587V325.5H588V326.5H589V327.5H590V328.5H591V329.5H592H593V330.5H594H595V331.5H596H597H598H599H600V330.5H601H602V329.5H603V328.5H604V327.5H605V326.5H606V325.5H607V324.5H608V322.5H609V321.5H610V319.5H611V317.5H612V315.5H613V313.5H614V311.5H615V309.5H616V307.5H617V304.5H618V302.5H619V299.5H620V297.5H621V294.5H622V291.5H623V288.5H624V286.5H625V283.5H626V280.5H627V277.5H628V274.5H629V271.5H630V268.5H631V265.5H632V261.5H633V258.5H634V255.5H635V252.5H636V249.5H637V246.5H638V243.5H639V240.5H640V237.5H641V235.5H642V232.5H643V229.5H644V226.5H645V224.5H646V221.5H647V219.5H648V217.5H649V214.5H650V212.5H651V210.5H652V208.5H653V206.5H654V205.5H655V203.5H656V202.5H657V200.5H658V199.5H659V198.5H660V197.5H661V196.5H662V195.5H663H664V194.5H665H666H667H668H669H670V195.5H671H672V196.5H673V197.5H674V198.5H675V199.5H676V200.5H677V201.5H678V203.5H679V204.5H680V206.5H681V208.5H682V210.5H683V212.5H684V214.5H685V216.5H686V218.5H687V221.5H688V223.5H689V226.5H690V229.5H691V231.5H692V234.5H693V237.5H694V240.5H695V243.5H696V246.5H697V249.5H698V252.5H699V255.5H700V258.5H701V261.5H702V264.5H703V267.5H704V270.5H705V273.5H706V276.5H707V279.5H708V282.5H709V285.5H710V288.5H711V291.5H712V294.5H713V296.5H714V299.5H715V301.5H716V304.5H717V306.5H718V309.5H719V311.5H720V313.5H721V315.5H722V317.5H723V319.5H724V320.5H725V322.5H726V324.5H727V325.5H728V326.5H729V327.5H730V328.5H731" stroke="#f0f064" stroke-width="1.25" fill="none" stroke-linejoin="miter"/>
<path d="M37 462.5H38H39H40H41V461.5H42H43V460.5H44V459.5H45V458.5H46V457.5H47V456.5H48V455.5H49V453.5H50V452.5H51V450.5H52V448.5H53V446.5H54V444.5H55V442.5H56V440.5H57V438.5H58V435.5H59V433.5H60V430.5H61V428.5H62V425.5H63V422.5H64V419.5H65V417.5H66V414.5H67V411.5H68V408.5H69V405.5H70V402.5H71V399.5H72V396.5H73V393.5H74V389.5H75V386.5H76V383.5H77V380.5H78V377.5H79V374.5H80V372.5H81V369.5H82V366.5H83V363.5H84V360.5H85V358.5H86V355.5H87V353.5H88V350.5H89V348.5H90V346.5H91V344.5H92V342.5H93V340.5H94V338.5H95V336.5H96V335.5H97V333.5H98V332.5H99V331.5H100V330.5H101V329.5H102V328.5H103H104V327.5H105H106V326.5H107H108H109H110V327.5H111H112V328.5H113H114V329.5H115V330.5H116V331.5H117V332.5H118V334.5H119V335.5H120V337.5H121V339.5H122V340.5H123V342.5H124V344.5H125V346.5H126V349.5H127V351.5H128V353.5H129V356.5H130V358.5H131V361.5H132V364.5H133V366.5H134V369.5H135V372.5H136V375.5H137V378.5H138V381.5H139V384.5H140V387.5H141V390.5H142V393.5H143V396.5H144V399.5H145V402.5H146V405.5H147V408.5H148V411.5H149V414.5H150V417.5H151V420.5H152V423.5H153V426.5H154V428.5H155V431.5H156V433.5H157V436.5H158V438.5H159V440.5H160V443.5H161V445.5H162V447.5H163V449.5H164V450.5H165V452.5H166V454.5H167V455.5H168V456.5H169V458.5H170V459.5H171H172V460.5H173V461.5H174H175V462.5H176H177H178H179H180H181V461.5H182H183V460.5H184V459.5H185V458.5H186V457.5H187V456.5H188V454.5H189V453.5H190V451.5H191V450.5H192V448.5H193V446.5H194V444.5H195V442.5H196V440.5H197V437.5H198V435.5H199V432.5H200V430.5H201V427.5H202V424.5H203V422.5H204V419.5H205V416.5H206V413.5H207V410.5H208V407.5H209V404.5H210V401.5H211V398.5H212V395.5H213V392.5H214V389.5H215V386.5H216V383.5H217V380.5H218V377.5H219V374.5H220V371.5H221V368.5H222V365.5H223V363.5H224V360.5H225V357.5H226V355.5H227V352.5H228V350.5H229V348.5H230V346.5H231V343.5H232V341.5H233V340.5H234V338.5H235V336.5H236V335.5H237V333.5H238V332.5H239V331.5H240V330.5H241V329.5H242V328.5H243V327.5H244H245H246V326.5H247H248H249H250V327.5H251H252V328.5H253H254V329.5H255V330.5H256V331.5H257V333.5H258V334.5H259V336.5H260V337.5H261V339.5H262V341.5H263V343.5H264V345.5H265V347.5H266V349.5H267V351.5H268V354.5H269V356.5H270V359.5H271V362.5H272V364.5H273V367.5H274V370.5H275V373.5H276V376.5H277V379.5H278V382.5H279V385.5H280V388.5H281V391.5H282V394.5H283V397.5H284V400.5H285V403.5H286V406.5H287V409.5H288V412.5H289V415.5H290V418.5H291V421.5H292V423.5H293V426.5H294V429.5H295V431.5H296V434.5H297V436.5H298V439.5H299V441.5H300V443.5H301V445.5H302V447.5H303V449.5H304V451.5H305V452.5H306V454.5H307V455.5H308V457.5H309V458.5H310V459.5H311V460.5H312H313V461.5H314V462.5H315H316H317H318H319H320H321V461.5H322H323V460.5H324V459.5H325V458.5H326V457.5H327V456.5H328V454.5H329V453.5H330V451.5H331V449.5H332V448.5H333V446.5H334V444.5H335V441.5H336V439.5H337V437.5H338V434.5H339V432.5H340V429.5H341V427.5H342V424.5H343V421.5H344V418.5H345V415.5H346V412.5H347V410.5H348V407.5H349V403.5H350V400.5H351V397.5H352V394.5H353V391.5H354V388.5H355V385.5H356V382.5H357V379.5H358V376.5H359V373.5H360V370.5H361V368.5H362V365.5H363V362.5H364V359.5H365V357.5H366V354.5H367V352.5H368V350.5H369V347.5H370V345.5H371V343.5H372V341.5H373V339.5H374V337.5H375V336.5H376V334.5H377V333.5H378V332.5H379V331.5H380V330.5H381V329.5H382V328.5H383V327.5H384H385V326.5H386H387H388H389H390V327.5H391H392V328.5H393V329.5H394V330.5H395V331.5H396V332.5H397V333.5H398V334.5H399V336.5H400V337.5H401V339.5H402V341.5H403V343.5H404V345.5H405V347.5H406V350.5H407V352.5H408V354.5H409V357.5H410V359.5H411V362.5H412V365.5H413V368.5H414V370.5H415V373.5H416V376.5H417V379.5H418V382.5H419V385.5H420V388.5H421V391.5H422V394.5H423V397.5H424V400.5H425V403.5H426V407.5H427V410.5H428V412.5H429V415.5H430V418.5H431V421.5H432V424.5H433V427.5H434V429.5H435V432.5H436V434.5H437V437.5H438V439.5H439V441.5H440V444.5H441V446.5H442V448.5H443V449.5H444V451.5H445V453.5H446V454.5H447V456.5H448V457.5H449V458.5H450V459.5H451V460.5H452V461.5H453H454V462.5H455H456H457H458H459H460H461V461.5H462V460.5H463H464V459.5H465V458.5H466V457.5H467V455.5H468V454.5H469V452.5H470V451.5H471V449.5H472V447.5H473V445.5H474V443.5H475V441.5H476V439.5H477V436.5H478V434.5H479V431.5H480V429.5H481V426.5H482V423.5H483V421.5H484V418.5H485V415.5H486V412.5H487V409.5H488V406.5H489V403.5H490V400.5H491V397.5H492V394.5H493V391.5H494V388.5H495V385.5H496V382.5H497V379.5H498V376.5H499V373.5H500V370.5H501V367.5H502V364.5H503V362.5H504V359.5H505V356.5H506V354.5H507V351.5H508V349.5H509V347.5H510V345.5H511V343.5H512V341.5H513V339.5H514V337.5H515V336.5H516V334.5H517V333.5H518V331.5H519V330.5H520V329.5H521V328.5H522H523V327.5H524H525V326.5H526H527H528H529V327.5H530H531H532V328.5H533V329.5H534V330.5H535V331.5H536V332.5H537V333.5H538V335.5H539V336.5H540V338.5H541V340.5H542V341.5H543V343.5H544V346.5H545V348.5H546V350.5H547V352.5H548V355.5H549V357.5H550V360.5H551V363.5H552V365.5H553V368.5H554V371.5H555V374.5H556V377.5H557V380.5H558V383.5H559V386.5H560V389.5H561V392.5H562V395.5H563V398.5H564V401.5H565V404.5H566V407.5H567V410.5H568V413.5H569V416.5H570V419.5H571V422.5H572V424.5H573V427.5H574V430.5H575V432.5H576V435.5H577V437.5H578V440.5H579V442.5H580V444.5H581V446.5H582V448.5H583V450.5H584V451.5H585V453.5H586V454.5H587V456.5H588V457.5H589V458.5H590V459.5H591V460.5H592V461.5H593H594V462.5H595H596H597H598H599H600V461.5H601H602V460.5H603V459.5H604H605V458.5H606V456.5H607V455.5H608V454.5H609V452.5H610V450.5H611V449.5H612V447.5H613V445.5H614V443.5H615V440.5H616V438.5H617V436.5H618V433.5H619V431.5H620V428.5H621V426.5H622V423.5H623V420.5H624V417.5H625V414.5H626V411.5H627V408.5H628V405.5H629V402.5H630V399.5H631V396.5H632V393.5H633V390.5H634V387.5H635V384.5H636V381.5H637V378.5H638V375.5H639V372.5H640V369.5H641V366.5H642V364.5H643V361.5H644V358.5H645V356.5H646V353.5H647V351.5H648V349.5H649V346.5H650V344.5H651V342.5H652V340.5H653V339.5H654V337.5H655V335.5H656V334.5H657V332.5H658V331.5H659V330.5H660V329.5H661V328.5H662H663V327.5H664H665V326.5H666H667H668H669V327.5H670H671V328.5H672H673V329.5H674V330.5H675V331.5H676V332.5H677V333.5H678V335.5H679V336.5H680V338.5H681V340.5H682V342.5H683V344.5H684V346.5H685V348.5H686V350.5H687V353.5H688V355.5H689V358.5H690V360.5H691V363.5H692V366.5H693V369.5H694V372.5H695V374.5H696V377.5H697V380.5H698V383.5H699V386.5H700V389.5H701V393.5H702V396.5H703V399.5H704V402.5H705V405.5H706V408.5H707V411.5H708V414.5H709V417.5H710V419.5H711V422.5H712V425.5H713V428.5H714V430.5H715V433.5H716V435.5H717V438.5H718V440.5H719V442.5H720V444.5H721V446.5H722V448.5H723V450.5H724V452.5H725V453.5H726V455.5H727V456.5H728V457.5H729V458.5H730V459.5H731" stroke="#c8f4f8" stroke-width="1.25" fill="none"/>
<path d="M37 558.5H38H39H40H41H42H43H44V557.5H45H46V556.5H47H48V555.5H49V554.5H50H51V553.5H52V552.5H53V551.5H54V550.5H55V549.5H56V548.5H57V547.5H58V546.5H59V544.5H60V543.5H61V542.5H62V541.5H63V539.5H64V538.5H65V537.5H66V535.5H67V534.5H68V532.5H69V531.5H70V530.5H71V528.5H72V527.5H73V455.5H74V454.5H75V452.5H76V451.5H77V449.5H78V448.5H79V447.5H80V445.5H81V444.5H82V442.5H83V441.5H84V440.5H85V439.5H86V437.5H87V436.5H88V435.5H89V434.5H90V433.5H91V432.5H92V431.5H93V430.5H94V429.5H95V428.5H96H97V427.5H98V426.5H99H100V425.5H101H102V424.5H103H104H105H106H107H108H109H110H111H112H113V425.5H114H115H116V426.5H117H118V427.5H119V428.5H120V429.5H121H122V430.5H123V431.5H124V432.5H125V433.5H126V434.5H127V435.5H128V436.5H129V438.5H130V439.5H131V440.5H132V441.5H133V443.5H134V444.5H135V445.5H136V447.5H137V448.5H138V450.5H139V451.5H140V453.5H141V454.5H142V455.5H143V527.5H144V528.5H145V530.5H146V531.5H147V533.5H148V534.5H149V536.5H150V537.5H151V538.5H152V540.5H153V541.5H154V542.5H155V543.5H156V545.5H157V546.5H158V547.5H159V548.5H160V549.5H161V550.5H162V551.5H163V552.5H164V553.5H165V554.5H166H167V555.5H168V556.5H169H170V557.5H171H172V558.5H173H174H175H176H177H178H179H180H181H182H183V557.5H184H185H186V556.5H187V555.5H188H189V554.5H190V553.5H191H192V552.5H193V551.5H194V550.5H195V549.5H196V548.5H197V547.5H198V545.5H199V544.5H200V543.5H201V542.5H202V540.5H203V539.5H204V538.5H205V536.5H206V535.5H207V534.5H208V532.5H209V531.5H210V529.5H211V528.5H212V526.5H213V455.5H214V453.5H215V452.5H216V451.5H217V449.5H218V448.5H219V446.5H220V445.5H221V444.5H222V442.5H223V441.5H224V440.5H225V438.5H226V437.5H227V436.5H228V435.5H229V434.5H230V433.5H231V432.5H232V431.5H233V430.5H234V429.5H235V428.5H236H237V427.5H238V426.5H239H240V425.5H241H242V424.5H243H244H245H246H247H248H249H250H251H252H253V425.5H254H255H256V426.5H257V427.5H258H259V428.5H260V429.5H261V430.5H262H263V431.5H264V432.5H265V433.5H266V434.5H267V436.5H268V437.5H269V438.5H270V439.5H271V440.5H272V442.5H273V443.5H274V444.5H275V446.5H276V447.5H277V449.5H278V450.5H279V451.5H280V453.5H281V454.5H282V456.5H283V527.5H284V529.5H285V530.5H286V532.5H287V533.5H288V534.5H289V536.5H290V537.5H291V539.5H292V540.5H293V541.5H294V543.5H295V544.5H296V545.5H297V546.5H298V547.5H299V548.5H300V549.5H301V550.5H302V551.5H303V552.5H304V553.5H305V554.5H306V555.5H307H308V556.5H309H310V557.5H311H312V558.5H313H314H315H316H317H318H319H320H321H322H323V557.5H324H325V556.5H326H327V555.5H328H329V554.5H330V553.5H331V552.5H332V551.5H333H334V550.5H335V549.5H336V547.5H337V546.5H338V545.5H339V544.5H340V543.5H341V541.5H342V540.5H343V539.5H344V538.5H345V536.5H346V535.5H347V533.5H348V532.5H349V530.5H350V529.5H351V528.5H352V526.5H353V455.5H354V453.5H355V452.5H356V450.5H357V449.5H358V447.5H359V446.5H360V445.5H361V443.5H362V442.5H363V441.5H364V439.5H365V438.5H366V437.5H367V436.5H368V435.5H369V434.5H370V433.5H371V432.5H372V431.5H373V430.5H374V429.5H375V428.5H376V427.5H377H378V426.5H379H380V425.5H381H382V424.5H383H384H385H386H387H388H389H390H391H392H393V425.5H394H395V426.5H396H397V427.5H398H399V428.5H400V429.5H401V430.5H402V431.5H403V432.5H404V433.5H405V434.5H406V435.5H407V436.5H408V437.5H409V438.5H410V439.5H411V441.5H412V442.5H413V443.5H414V445.5H415V446.5H416V447.5H417V449.5H418V450.5H419V452.5H420V453.5H421V455.5H422V456.5H423V528.5H424V529.5H425V530.5H426V532.5H427V533.5H428V535.5H429V536.5H430V538.5H431V539.5H432V540.5H433V541.5H434V543.5H435V544.5H436V545.5H437V546.5H438V547.5H439V549.5H440V550.5H441V551.5H442H443V552.5H444V553.5H445V554.5H446V555.5H447H448V556.5H449H450V557.5H451H452V558.5H453H454H455H456H457H458H459H460H461H462H463V557.5H464H465V556.5H466H467V555.5H468H469V554.5H470V553.5H471V552.5H472V551.5H473V550.5H474V549.5H475V548.5H476V547.5H477V546.5H478V545.5H479V544.5H480V543.5H481V541.5H482V540.5H483V539.5H484V537.5H485V536.5H486V534.5H487V533.5H488V532.5H489V530.5H490V529.5H491V527.5H492V456.5H493V454.5H494V453.5H495V451.5H496V450.5H497V449.5H498V447.5H499V446.5H500V444.5H501V443.5H502V442.5H503V440.5H504V439.5H505V438.5H506V437.5H507V436.5H508V434.5H509V433.5H510V432.5H511V431.5H512V430.5H513H514V429.5H515V428.5H516V427.5H517H518V426.5H519V425.5H520H521H522V424.5H523H524H525H526H527H528H529H530H531H532H533V425.5H534H535V426.5H536H537V427.5H538V428.5H539H540V429.5H541V430.5H542V431.5H543V432.5H544V433.5H545V434.5H546V435.5H547V436.5H548V437.5H549V438.5H550V440.5H551V441.5H552V442.5H553V444.5H554V445.5H555V446.5H556V448.5H557V449.5H558V451.5H559V452.5H560V453.5H561V455.5H562V526.5H563V528.5H564V529.5H565V531.5H566V532.5H567V534.5H568V535.5H569V536.5H570V538.5H571V539.5H572V540.5H573V542.5H574V543.5H575V544.5H576V545.5H577V547.5H578V548.5H579V549.5H580V550.5H581V551.5H582V552.5H583V553.5H584H585V554.5H586V555.5H587H588V556.5H589V557.5H590H591H592V558.5H593H594H595H596H597H598H599H600H601H602H603V557.5H604H605V556.5H606H607V555.5H608V554.5H609H610V553.5H611V552.5H612V551.5H613V550.5H614V549.5H615V548.5H616V547.5H617V546.5H618V545.5H619V543.5H620V542.5H621V541.5H622V540.5H623V538.5H624V537.5H625V536.5H626V534.5H627V533.5H628V531.5H629V530.5H630V528.5H631V527.5H632V455.5H633V454.5H634V453.5H635V451.5H636V450.5H637V448.5H638V447.5H639V445.5H640V444.5H641V443.5H642V441.5H643V440.5H644V439.5H645V438.5H646V436.5H647V435.5H648V434.5H649V433.5H650V432.5H651V431.5H652V430.5H653V429.5H654H655V428.5H656V427.5H657V426.5H658H659V425.5H660H661H662V424.5H663H664H665H666H667H668H669H670H671H672H673V425.5H674H675V426.5H676H677V427.5H678V428.5H679H680V429.5H681V430.5H682V431.5H683V432.5H684V433.5H685V434.5H686V435.5H687V436.5H688V437.5H689V439.5H690V440.5H691V441.5H692V442.5H693V444.5H694V445.5H695V447.5H696V448.5H697V449.5H698V451.5H699V452.5H700V454.5H701V455.5H702V527.5H703V528.5H704V530.5H705V531.5H706V532.5H707V534.5H708V535.5H709V537.5H710V538.5H711V539.5H712V541.5H713V542.5H714V543.5H715V544.5H716V546.5H717V547.5H718V548.5H719V549.5H720V550.5H721V551.5H722V552.5H723V553.5H724V554.5H725H726V555.5H727V556.5H728H729V557.5H730H731" stroke="#7a26e8" stroke-width="1.35" fill="none"/>
<path d="M37 664H73v2H37zM73 529h1V666h-1zM73 529H143v2H73zM143 529h1V666h-1zM143 664H213v2H143zM213 529h1V666h-1zM213 529H283v2H213zM283 529h1V666h-1zM283 664H353v2H283zM353 529h1V666h-1zM353 529H423v2H353zM423 529h1V666h-1zM423 664H492v2H423zM492 529h1V666h-1zM492 529H562v2H492zM562 529h1V666h-1zM562 664H632v2H562zM632 529h1V666h-1zM632 529H702v2H632zM702 529h1V666h-1zM702 664H731v2H702z" fill="#94e04c" shape-rendering="crispEdges"/>
</svg>

<div class="a" style="left:16px;top:120px;width:51px;height:21px;background:#0c0c0c"></div>
<div class="t" style="left:24px;top:124px;font-size:13px;color:#a4e060">Trig'D</div>
<div class="a" style="left:15px;top:144px;width:737px;height:2px;background:#f0f0f0"></div>
<div class="a" style="left:647px;top:120px;width:102px;height:23px;background:#0c0c0c"></div>
<svg class="a" style="left:649px;top:121px" width="14" height="19"><path d="M1.5 17.5H8V1.5H12" stroke="#f0f098" stroke-width="1.1" fill="none"/><path d="M4 11L8 7.5L11.5 11Z" fill="#f0f098"/></svg>
<div class="a" style="left:666px;top:123px;width:27px;height:15px;background:#f4f04c"></div>
<div class="t" style="left:667px;top:125px;font-size:12.5px;color:#000">CH1</div>
<div class="t" style="left:700px;top:125px;font-size:13px;color:#f0f060">-502mV</div>
<div class="a" style="left:35px;top:700px;width:92px;height:19px;background:#0c0c0c"></div>
<div class="t" style="left:37px;top:704px;font-size:12.5px;color:#ecec78">CH1</div>
<svg class="a" style="left:64px;top:705px" width="14" height="10"><path d="M1 3.5H2.5M4 3.5H5.5M7 3.5H8.5M10 3.5H11.5" stroke="#ecec78" stroke-width="1"/><path d="M1 6.5H11.5" stroke="#ecec78" stroke-width="1.2"/></svg>
<div class="t" style="left:86px;top:704px;font-size:12.3px;color:#ecec78">1.00V</div>
<div class="a" style="left:175px;top:700px;width:92px;height:19px;background:#0c0c0c"></div>
<div class="t" style="left:177px;top:704px;font-size:12.5px;color:#a8e070">CH2</div>
<svg class="a" style="left:204px;top:705px" width="14" height="10"><path d="M1 3.5H2.5M4 3.5H5.5M7 3.5H8.5M10 3.5H11.5" stroke="#a8e070" stroke-width="1"/><path d="M1 6.5H11.5" stroke="#a8e070" stroke-width="1.2"/></svg>
<div class="t" style="left:226px;top:704px;font-size:12.3px;color:#a8e070">1.00V</div>
<div class="a" style="left:523px;top:700px;width:210px;height:19px;background:#0c0c0c"></div>
<div class="t" style="left:525px;top:704px;font-size:12.7px;color:#e0883a">Time: 500.0us</div>
<div class="t" style="left:622px;top:704px;font-size:12.4px;color:#e0883a">Sample Rate: 1MHz</div>
<svg class="a" style="left:0;top:0" width="971" height="755"><path d="M16 258.0H28L33 263.5L28 269.0H16Z" fill="#f0f040" stroke="rgba(0,0,0,.35)" stroke-width=".6"/><text x="22.5" y="267.5" font-family="Liberation Sans" font-size="10.5" fill="#000" text-anchor="middle">1</text><path d="M16 389.5H28L33 395L28 400.5H16Z" fill="#c4f0f8" stroke="rgba(0,0,0,.35)" stroke-width=".6"/><text x="22.5" y="399" font-family="Liberation Sans" font-size="10.5" fill="#303040" text-anchor="middle">R</text><path d="M16 486.0H28L33 491.5L28 497.0H16Z" fill="#7414e4" stroke="rgba(0,0,0,.35)" stroke-width=".6"/><text x="22.5" y="495.5" font-family="Liberation Sans" font-size="10.5" fill="#3a0090" text-anchor="middle">M</text><path d="M16 591.5H28L33 597L28 602.5H16Z" fill="#a4f050" stroke="rgba(0,0,0,.35)" stroke-width=".6"/><text x="22.5" y="601" font-family="Liberation Sans" font-size="10.5" fill="#000" text-anchor="middle">2</text><path d="M740 292.0H752V303.0H740L735 297.5Z" fill="#f0f040" stroke="rgba(0,0,0,.35)" stroke-width=".6"/><text x="746.0" y="301.5" font-family="Liberation Sans" font-size="10.5" fill="#000" text-anchor="middle">T</text></svg>
<div class="a" style="left:759px;top:93px;width:204px;height:635px;background:#f6f6f9"></div>
<div class="a" style="left:763px;top:93px;width:200px;height:20px;background:linear-gradient(180deg,#e9ebf3,#e2e5ee)"></div>
<div class="t" style="left:767px;top:96px;font-size:12.6px;color:#5c6270">Control Panel</div>
<svg class="a" style="left:929px;top:96px" width="30" height="12"><path d="M4.5 1.5H9.5V7.5H4.5ZM3 7.5H11M7 7.5V11" stroke="#000" stroke-width="1.3" fill="none"/><rect x="5" y="2" width="2" height="5" fill="#000"/><path d="M20.5 2L27.5 9M27.5 2L20.5 9" stroke="#000" stroke-width="1.7"/></svg>
<div class="a" style="left:763px;top:113px;width:200px;height:46px;background:linear-gradient(180deg,#e6e8f0 0,#e6e8f0 22px,#fbfbfc 23px,#f4f4f7 30px,#d8d8e0 40px,#c8c8d2 46px)"></div>
<div class="a" style="left:763px;top:112px;width:199px;height:23px;border:1px solid #767676;border-radius:3px;background:linear-gradient(180deg,#f6f6f6 0,#ececec 45%,#dedede 55%,#d6d6d6 100%)"></div>
<div class="t" style="left:767px;top:118px;font-size:12px">Scope</div>
<svg class="a" style="left:950px;top:121px" width="10" height="6"><path d="M0 0H9L4.5 5Z" fill="#000"/></svg>
<div class="a" style="left:763px;top:159px;width:184px;height:552px;background:#f0f0f0;overflow:hidden">
</div>
<div class="a" style="left:769px;top:172px;width:178px;height:117px;border:1px solid #dcdcdc;box-shadow:inset 1px 1px 0 #fff,1px 1px 0 #fff"></div><div class="a" style="left:842px;top:165px;height:12px;background:#f0f0f0;padding:0 4px"><span style="font-size:11.3px;line-height:12px;position:relative;top:-1px">Horizontal</span></div>
<div class="t" style="left:778px;top:186px;font-size:10.5px">Time/DIV</div>
<div class="a" style="left:777px;top:203px;width:74px;height:22px;border-radius:3px;border:1px solid #8c8c8c;background:linear-gradient(180deg,#f4f4f4 0,#ebebeb 45%,#dddddd 50%,#d8d8d8 100%)"></div><div class="t" style="left:781px;top:209px;font-size:11.2px;color:#000">500.0us</div><svg class="a" style="left:838px;top:213px" width="9" height="5"><path d="M0 0H8L4 4.5Z" fill="#000"/></svg>
<div class="t" style="left:778px;top:237px;font-size:10.8px">Format</div>
<div class="a" style="left:777px;top:255px;width:74px;height:22px;border-radius:3px;border:1px solid #8c8c8c;background:linear-gradient(180deg,#f4f4f4 0,#ebebeb 45%,#dddddd 50%,#d8d8d8 100%)"></div><div class="t" style="left:781px;top:261px;font-size:11.2px;color:#505050">Y-T</div><svg class="a" style="left:838px;top:265px" width="9" height="5"><path d="M0 0H8L4 4.5Z" fill="#000"/></svg>
<svg class="a" style="left:870px;top:195px" width="80" height="80"><circle cx="40" cy="40" r="35.2" fill="none" stroke="#000" stroke-width="1.1"/><circle cx="40" cy="40" r="34.1" fill="none" stroke="#fff" stroke-width="1.1"/><circle cx="40.3" cy="40.3" r="32.9" fill="none" stroke="#000" stroke-width="1.1"/><circle cx="40.8" cy="40.8" r="30.2" fill="none" stroke="#cacaca" stroke-width="4.6"/><circle cx="41.5" cy="41.2" r="28" fill="#2010d0" stroke="rgba(0,0,0,.45)" stroke-width=".6"/><path d="M43.1 36.5L49.0 19.5" stroke="#fff" stroke-opacity="1.0" stroke-width="1.8"/><path d="M10 71L20 62.5M72 71L65.5 65" stroke="#000" stroke-width="1.2"/><path d="M61 21l2.5 -2" stroke="#707070" stroke-width="1.5"/></svg>
<div class="a" style="left:769px;top:310px;width:178px;height:281px;border:1px solid #dcdcdc;box-shadow:inset 1px 1px 0 #fff,1px 1px 0 #fff"></div><div class="a" style="left:848px;top:303px;height:12px;background:#f0f0f0;padding:0 4px"><span style="font-size:11.3px;line-height:12px;position:relative;top:-1px">Vertical</span></div>
<div class="a" style="left:777px;top:325px;width:13px;height:13px;border:1px solid #8e8f8f;background:linear-gradient(135deg,#dcdcdc,#f6f6f6)"></div><div class="a" style="left:779px;top:327px;width:9px;height:9px;border:1px solid #c8c8c8;background:linear-gradient(135deg,#d0d0d0,#f4f4f4)"></div><svg class="a" style="left:777px;top:325px" width="13" height="13"><path d="M3.5 6.5L5.8 10L9.8 3" stroke="#464e78" stroke-width="2" fill="none"/></svg>
<div class="t" style="left:794px;top:327px;font-size:10.5px">CH1</div>
<div class="a" style="left:777px;top:346px;width:74px;height:22px;border-radius:3px;border:1px solid #8c8c8c;background:linear-gradient(180deg,#f4f4f4 0,#ebebeb 45%,#dddddd 50%,#d8d8d8 100%)"></div><div class="t" style="left:781px;top:352px;font-size:11.2px;color:#000">1.00V</div><svg class="a" style="left:838px;top:356px" width="9" height="5"><path d="M0 0H8L4 4.5Z" fill="#000"/></svg>
<svg class="a" style="left:870px;top:329.5px" width="80" height="80"><circle cx="40" cy="40" r="35.2" fill="none" stroke="#000" stroke-width="1.1"/><circle cx="40" cy="40" r="34.1" fill="none" stroke="#fff" stroke-width="1.1"/><circle cx="40.3" cy="40.3" r="32.9" fill="none" stroke="#000" stroke-width="1.1"/><circle cx="40.8" cy="40.8" r="30.2" fill="none" stroke="#cacaca" stroke-width="4.6"/><circle cx="41.5" cy="41.2" r="28" fill="#f8f840" stroke="rgba(0,0,0,.45)" stroke-width=".6"/><path d="M37.1 38.9L21.2 30.4" stroke="#fff" stroke-opacity="0.5" stroke-width="1.8"/><path d="M10 71L20 62.5M72 71L65.5 65" stroke="#000" stroke-width="1.2"/><path d="M61 21l2.5 -2" stroke="#707070" stroke-width="1.5"/></svg>
<div class="a" style="left:777px;top:416px;width:74px;height:22px;border-radius:3px;border:1px solid #8c8c8c;background:linear-gradient(180deg,#f4f4f4 0,#ebebeb 45%,#dddddd 50%,#d8d8d8 100%)"></div><div class="t" style="left:781px;top:422px;font-size:11.2px;color:#000">x1</div><svg class="a" style="left:838px;top:426px" width="9" height="5"><path d="M0 0H8L4 4.5Z" fill="#000"/></svg>
<div class="a" style="left:888px;top:423px;width:13px;height:13px;border:1px solid #8e8f8f;background:linear-gradient(135deg,#dcdcdc,#f6f6f6)"></div><div class="a" style="left:890px;top:425px;width:9px;height:9px;border:1px solid #c8c8c8;background:linear-gradient(135deg,#d0d0d0,#f4f4f4)"></div>
<div class="t" style="left:904px;top:425px;font-size:11px">Invert</div>
<div class="a" style="left:777px;top:465px;width:13px;height:13px;border:1px solid #8e8f8f;background:linear-gradient(135deg,#dcdcdc,#f6f6f6)"></div><div class="a" style="left:779px;top:467px;width:9px;height:9px;border:1px solid #c8c8c8;background:linear-gradient(135deg,#d0d0d0,#f4f4f4)"></div><svg class="a" style="left:777px;top:465px" width="13" height="13"><path d="M3.5 6.5L5.8 10L9.8 3" stroke="#464e78" stroke-width="2" fill="none"/></svg>
<div class="t" style="left:794px;top:467px;font-size:10.5px">CH2</div>
<div class="a" style="left:777px;top:486px;width:74px;height:22px;border-radius:3px;border:1px solid #8c8c8c;background:linear-gradient(180deg,#f4f4f4 0,#ebebeb 45%,#dddddd 50%,#d8d8d8 100%)"></div><div class="t" style="left:781px;top:492px;font-size:11.2px;color:#000">1.00V</div><svg class="a" style="left:838px;top:496px" width="9" height="5"><path d="M0 0H8L4 4.5Z" fill="#000"/></svg>
<svg class="a" style="left:870px;top:472px" width="80" height="80"><circle cx="40" cy="40" r="35.2" fill="none" stroke="#000" stroke-width="1.1"/><circle cx="40" cy="40" r="34.1" fill="none" stroke="#fff" stroke-width="1.1"/><circle cx="40.3" cy="40.3" r="32.9" fill="none" stroke="#000" stroke-width="1.1"/><circle cx="40.8" cy="40.8" r="30.2" fill="none" stroke="#cacaca" stroke-width="4.6"/><circle cx="41.5" cy="41.2" r="28" fill="#98f040" stroke="rgba(0,0,0,.45)" stroke-width=".6"/><path d="M37.1 38.9L21.2 30.4" stroke="#fff" stroke-opacity="0.55" stroke-width="1.8"/><path d="M10 71L20 62.5M72 71L65.5 65" stroke="#000" stroke-width="1.2"/><path d="M61 21l2.5 -2" stroke="#707070" stroke-width="1.5"/></svg>
<div class="a" style="left:777px;top:556px;width:74px;height:22px;border-radius:3px;border:1px solid #8c8c8c;background:linear-gradient(180deg,#f4f4f4 0,#ebebeb 45%,#dddddd 50%,#d8d8d8 100%)"></div><div class="t" style="left:781px;top:562px;font-size:11.2px;color:#000">x1</div><svg class="a" style="left:838px;top:566px" width="9" height="5"><path d="M0 0H8L4 4.5Z" fill="#000"/></svg>
<div class="a" style="left:888px;top:563px;width:13px;height:13px;border:1px solid #8e8f8f;background:linear-gradient(135deg,#dcdcdc,#f6f6f6)"></div><div class="a" style="left:890px;top:565px;width:9px;height:9px;border:1px solid #c8c8c8;background:linear-gradient(135deg,#d0d0d0,#f4f4f4)"></div>
<div class="t" style="left:904px;top:565px;font-size:11px">Invert</div>
<div class="a" style="left:763px;top:600px;width:184px;height:111px;overflow:hidden">
<div class="a" style="left:6px;top:12px;width:200px;height:200px;border:1px solid #dcdcdc;box-shadow:inset 1px 1px 0 #fff"></div>
<div class="a" style="left:86px;top:6px;height:12px;background:#f0f0f0;padding:0 4px;font-size:11.2px;line-height:12px">Trigger</div>
<div class="t" style="left:18px;top:38px;font-size:10.8px">Trigger Mode</div>
<div class="t" style="left:18px;top:73px;font-size:10.9px">Trigger Sweep</div>
<div class="t" style="left:18px;top:108px;font-size:10.9px">Trigger Source</div>
<div class="a" style="left:114px;top:33px;width:74px;height:22px;border-radius:3px;border:1px solid #8c8c8c;background:linear-gradient(180deg,#f4f4f4 0,#ebebeb 45%,#dddddd 50%,#d8d8d8 100%)"></div><div class="t" style="left:118px;top:39px;font-size:11.2px;color:#000">Edge</div><svg class="a" style="left:175px;top:43px" width="9" height="5"><path d="M0 0H8L4 4.5Z" fill="#000"/></svg>
<div class="a" style="left:114px;top:68px;width:74px;height:22px;border-radius:3px;border:1px solid #8c8c8c;background:linear-gradient(180deg,#f4f4f4 0,#ebebeb 45%,#dddddd 50%,#d8d8d8 100%)"></div><div class="t" style="left:118px;top:74px;font-size:11.2px;color:#000">AUTO</div><svg class="a" style="left:175px;top:78px" width="9" height="5"><path d="M0 0H8L4 4.5Z" fill="#000"/></svg>
<div class="a" style="left:114px;top:103px;width:74px;height:22px;border-radius:3px;border:1px solid #8c8c8c;background:linear-gradient(180deg,#f4f4f4 0,#ebebeb 45%,#dddddd 50%,#d8d8d8 100%)"></div><div class="t" style="left:118px;top:109px;font-size:11.2px;color:#000">CH1</div><svg class="a" style="left:175px;top:113px" width="9" height="5"><path d="M0 0H8L4 4.5Z" fill="#000"/></svg>
</div>
<div class="a" style="left:947px;top:159px;width:16px;height:552px;background:#eaeaea"></div>
<svg class="a" style="left:951px;top:165px" width="9" height="6"><path d="M0.5 5L4.5 1L8.5 5Z" fill="#505050"/></svg>
<div class="a" style="left:947px;top:177px;width:15px;height:366px;border:1px solid #b2b2b2;border-radius:2px;background:linear-gradient(90deg,#f0f0f0,#e2e2e2 60%,#d4d4d4)"></div>
<svg class="a" style="left:950px;top:355px" width="9" height="9"><path d="M1 1.5H8M1 4H8M1 6.5H8" stroke="#707070" stroke-width="1"/></svg>
<svg class="a" style="left:951px;top:699px" width="9" height="6"><path d="M0.5 1L4.5 5L8.5 1Z" fill="#505050"/></svg>
<div class="a" style="left:763px;top:711px;width:184px;height:17px;background:#eaeaea"></div>
<svg class="a" style="left:767px;top:715px" width="6" height="9"><path d="M5 0.5L1 4.5L5 8.5Z" fill="#505050"/></svg>
<svg class="a" style="left:936px;top:715px" width="6" height="9"><path d="M1 0.5L5 4.5L1 8.5Z" fill="#505050"/></svg>
<div class="a" style="left:781px;top:712px;width:125px;height:15px;border:1px solid #a8a8a8;border-radius:2px;background:linear-gradient(180deg,#f4f4f4,#e4e4e4 50%,#d8d8d8)"></div>
<svg class="a" style="left:838px;top:716px" width="9" height="8"><path d="M1.5 0V7M4.5 0V7M7.5 0V7" stroke="#707070" stroke-width="1"/></svg>
<div class="a" style="left:947px;top:711px;width:16px;height:17px;background:#f0f0f0"></div>

<div class="a" style="left:8px;top:728px;width:955px;height:19px;background:#f1efef;border-top:1px solid #8a8878;box-shadow:inset 0 1px 0 #fff, inset 0 -1px 0 #fff"></div>
<div class="t" style="left:12px;top:734px;font-size:12px">Running...</div>
<div class="t" style="left:842px;top:734px;font-size:11px">14-03-2017&nbsp;&nbsp;08:59</div>
<svg class="a" style="left:951px;top:735px" width="10" height="10"><g fill="#b8b8c0"><rect x="7" y="1" width="2" height="2"/><rect x="4" y="4" width="2" height="2"/><rect x="7" y="4" width="2" height="2"/><rect x="1" y="7" width="2" height="2"/><rect x="4" y="7" width="2" height="2"/><rect x="7" y="7" width="2" height="2"/></g></svg>

</body></html>
